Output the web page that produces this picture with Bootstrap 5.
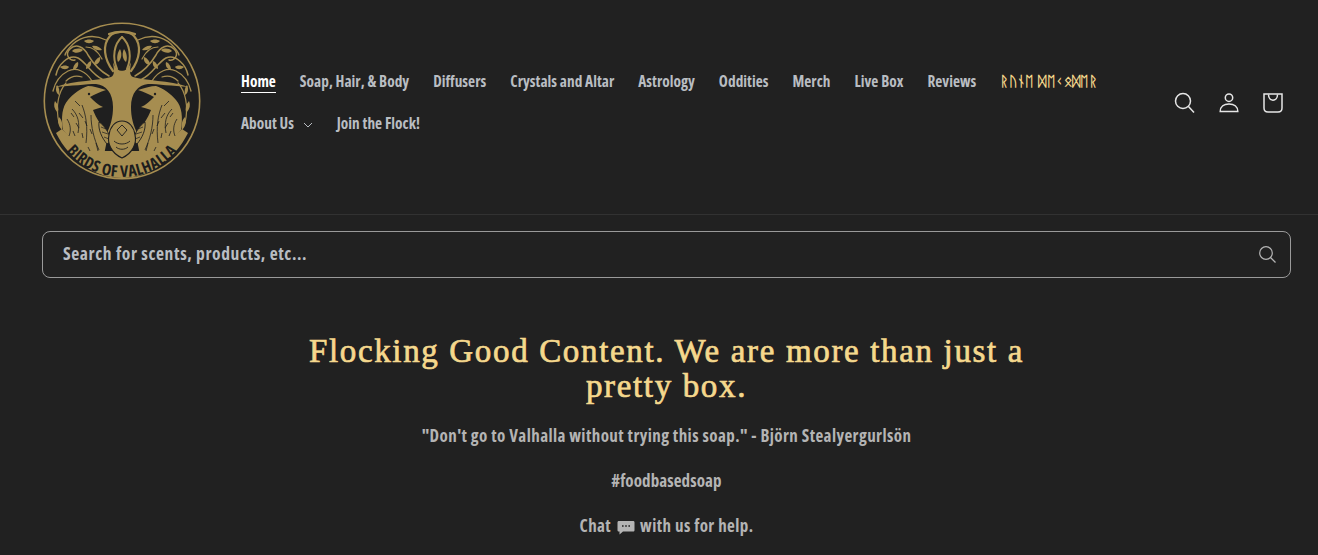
<!DOCTYPE html>
<html lang="en">
<head>
  <meta charset="UTF-8">
  <meta name="viewport" content="width=device-width, initial-scale=1">
  <title>Birds of Valhalla</title>
  <link href="https://cdn.jsdelivr.net/npm/bootstrap@5.3.3/dist/css/bootstrap.min.css" rel="stylesheet">
  <style>
    html, body {
      background-color: #212121;
      overflow: hidden;
    }
    body {
      font-family: "Open Sans", "Liberation Sans", sans-serif;
      font-stretch: 75%;
      color: #bcbcbc;
      height: 555px;
    }
    .site-head {
      height: 215px;
      padding: 21px 23px 0 42px;
      border-bottom: 1px solid #323232;
    }
    .logo-box { width: 160px; height: 160px; flex: none; }
    .logo-word {
      font-family: "Open Sans", sans-serif;
      font-stretch: 75%;
      font-weight: 700;
      font-size: 16px;
      letter-spacing: .35px;
      fill: #1d1d1d;
    }
    .main-menu {
      width: 890px;
      margin-left: 27px;
      margin-top: 39px;
    }
    .main-menu a {
      display: inline-block;
      padding: 12px;
      line-height: 18px;
      font-size: 15.3px;
      font-weight: 700;
      letter-spacing: .03px;
      color: #b9bdc2;
      text-decoration: none;
    }
    .main-menu a.now { color: #fff; }
    .main-menu a.now span { border-bottom: 1px solid #fff; padding-bottom: 1px; }
    .main-menu a.runes {
      color: #f3d58a;
      font-family: "DejaVu Sans", "Noto Sans", sans-serif;
      font-size: 13.5px;
      font-weight: 700;
      letter-spacing: .4px;
    }
    .caret-mark { margin-left: 6px; }
    .head-icons { margin-left: auto; margin-top: 60px; height: 44px; }
    .head-icons a { width: 44px; height: 44px; display: flex; align-items: center; justify-content: center; color: #e6e6e6; }
    .search-bar {
      margin: 16px 0 0 42px;
      width: 1249px;
      height: 47px;
      border: 1px solid #9a9a9a;
      border-radius: 8px;
      padding: 0 13px 0 20px;
    }
    .search-bar input {
      background: transparent;
      border: 0;
      outline: 0;
      padding: 0 0 2px;
      flex: 1;
      font-stretch: 75%;
      font-size: 17.5px;
      font-weight: 700;
      letter-spacing: .6px;
      color: #b9bdc2;
    }
    .search-bar input::placeholder { color: #b9bdc2; opacity: 1; }
    .intro-block {
      margin: 56px 0 0 42px;
      width: 1249px;
    }
    .intro-title {
      width: 750px;
      font-family: "Liberation Serif", serif;
      font-size: 33px;
      line-height: 35px;
      font-weight: 400;
      letter-spacing: 1.65px;
      -webkit-text-stroke: .7px #f5d88d;
      color: #f5d88d;
      margin: 0 auto 20px;
    }
    .intro-block p {
      font-size: 17px;
      font-weight: 700;
      line-height: 23px;
      letter-spacing: .42px;
      color: #b4b4b4;
      margin: 0 0 22px;
    }
    .intro-block p.tag-line { letter-spacing: .1px; }
    .chat-mark { margin: 0 2px; }
  </style>
</head>
<body>
  <header class="site-head d-flex align-items-start">
    <a href="#" class="logo-box d-block">
      <svg width="160" height="160" viewBox="0 0 160 160">
        <circle cx="80" cy="80" r="77.7" fill="#1f1f1f" stroke="#a68d50" stroke-width="1.600"/>
        <path fill="#a68d50" d="M20 108C30 118 46 130 64 130L96 130C114 130 130 118 140 108L146 112C132 140 106 157 80 157C54 157 28 140 14 112Z"/>
        <g id="half-logo">
          <!-- crown and vines -->
          <g fill="none" stroke="#a68d50" stroke-linecap="round">
            <path stroke-width="2.200" d="M71 50C62 38 60 24 68 15C72 11 82 9 93 13"/>
            <path stroke-width="2" d="M75 48C70 36 72 23 80 16"/>
            <path stroke-width="1.500" d="M67 55C58 50 52 44 46 34C42 26 34 22 28 28C22 34 28 40 33 39"/>
            <path stroke-width="1.500" d="M60 58C50 54 44 41 36 37C26 33 16 44 14 54"/>
            <path stroke-width="1.300" d="M64 19C52 13 40 15 31 23C27 27 24 30 23 34"/>
            <path stroke-width="1.300" d="M50 60C44 50 34 46 26 50C18 54 13 62 11 70"/>
            <path stroke-width="1.200" d="M24 62C17 70 13 84 17 102"/>
            <path stroke-width="1.200" d="M60 38C56 30 50 26 44 26M40 56C34 54 28 56 24 60"/>
          </g>
          <!-- leaves -->
          <g fill="#a68d50">
            <path d="M76 41C74 36 76 31 78 28C80 32 80 38 76 41Z"/>
            <path d="M50 25C54 24 58 26 60 29C56 30 52 29 50 25Z"/>
            <path d="M30 30C33 27 38 27 41 29C38 32 33 33 30 30Z"/>
            <path d="M52 44C52 40 55 37 58 36C59 40 56 44 52 44Z"/>
            <path d="M44 48C44 44 46 41 49 40C50 44 48 47 44 48Z"/>
            <path d="M31 49C31 45 33 42 36 41C37 45 35 48 31 49Z"/>
            <path d="M18 46C21 44 25 44 27 46C25 49 21 49 18 46Z"/>
            <path d="M15 64C17 66 18 70 17 74C14 72 13 68 15 64Z"/>
            <path d="M13 80C16 83 17 87 16 92C13 89 11 85 13 80Z"/>
            <path d="M17 96C20 99 21 104 20 109C17 106 15 101 17 96Z"/>
            <path d="M42 20C45 18 49 18 52 20C49 23 45 23 42 20Z"/>
          </g>
          <!-- trunk and main branch -->
          <path fill="#a68d50" d="M81 50C76 50 73 47 71 41C72 50 73 54 69 56C56 60 34 59 13 66C30 65 44 63 54 63C64 64 71 72 71 86C71 96 69 104 64 114L81 114Z"/>
          <!-- raven -->
          <path fill="#a68d50" d="M46 65C51 65 57 67 64 69C58 71 53 73 48 76C52 80 56 84 61 86C57 87 54 88 51 89C54 97 60 106 66 114L62 134C44 128 30 120 21 109C19 96 20 86 26 79C31 73 39 67 46 65Z"/>
          <g fill="none" stroke="#1f1f1f" stroke-width=".8">
            <path d="M30 88C36 94 38 102 36 112M40 84C44 94 46 106 44 122M49 94C49 106 52 118 57 129M25 98C29 104 29 110 27 115"/>
            <path d="M33 80L38 85M37 92L41 97M29 92L32 96M43 100L45 105M34 102L37 107M40 112L41 117M48 108L50 113M31 110L33 115"/>
            <path d="M54 122L56 130M46 126L48 130"/>
          </g>
          <circle cx="47" cy="73" r="1.200" fill="#1f1f1f"/>
          <!-- wing tip -->
          <path fill="#a68d50" stroke="#1f1f1f" stroke-width=".9" d="M57 101C62 104 67 111 69 120L65 123C60 117 56 109 57 101Z"/>
          <path fill="none" stroke="#1f1f1f" stroke-width=".7" d="M59 106L64 108M60 111L66 113M62 116L67 118"/>
        </g>
        <use href="#half-logo" transform="translate(160 0) scale(-1 1)"/>
        <!-- small bird -->
        <path fill="#a68d50" stroke="#1f1f1f" stroke-width="1.100" d="M80 100C87 100 92 106 93 114C95 122 91 132 80 137C69 132 65 122 67 114C68 106 73 100 80 100Z"/>
        <path fill="none" stroke="#1f1f1f" stroke-width=".9" d="M75 109L80 104L85 109L80 115ZM72 120C76 124 84 124 88 120M74 126C77 129 83 129 86 126"/>
        <path id="logo-arc" fill="none" d="M9 100A73 73 0 0 0 151 100"/>
        <text class="logo-word">
          <textPath href="#logo-arc" startOffset="50%" text-anchor="middle">BIRDS OF VALHALLA</textPath>
        </text>
      </svg>
    </a>
    <nav class="main-menu d-flex flex-wrap">
      <a href="#" class="now"><span>Home</span></a>
      <a href="#">Soap, Hair, &amp; Body</a>
      <a href="#">Diffusers</a>
      <a href="#">Crystals and Altar</a>
      <a href="#">Astrology</a>
      <a href="#">Oddities</a>
      <a href="#">Merch</a>
      <a href="#">Live Box</a>
      <a href="#">Reviews</a>
      <a href="#" class="runes">ᚱᚢᚾᛖ ᛞᛖᚲᛟᛞᛖᚱ</a>
      <a href="#">About Us
        <svg class="caret-mark" width="10" height="6" viewBox="0 0 10 6"><path d="M1 1l4 4 4-4" fill="none" stroke="#b9bdc2"/></svg>
      </a>
      <a href="#">Join the Flock!</a>
    </nav>
    <div class="head-icons d-flex">
      <a href="#" aria-label="Search">
        <svg width="22" height="22" viewBox="0 0 22 22" fill="none" stroke="currentColor" stroke-width="1.500"><circle cx="9" cy="9" r="7.500"/><path d="M14.500 14.500L20 20.500"/></svg>
      </a>
      <a href="#" aria-label="Account">
        <svg width="20" height="20" viewBox="0 0 20 20" fill="none" stroke="currentColor" stroke-width="1.500"><circle cx="10" cy="4.700" r="3.700"/><path d="M1.200 18.500C1.200 13.500 5 11 10 11C15 11 18.800 13.500 18.800 18.500Z"/></svg>
      </a>
      <a href="#" aria-label="Cart">
        <svg width="20" height="20" viewBox="0 0 20 20" fill="none" stroke="currentColor" stroke-width="1.500"><path d="M1 1H19V15C19 17.500 17.500 19 15 19H5C2.500 19 1 17.500 1 15Z"/><path d="M5.500 1.500C5.500 9 14.500 9 14.500 1.500"/></svg>
      </a>
    </div>
  </header>

  <form class="search-bar d-flex align-items-center">
    <input type="text" placeholder="Search for scents, products, etc...">
    <svg width="19" height="19" viewBox="0 0 19 19" fill="none" stroke="#b5b5b5" stroke-width="1.200"><circle cx="8" cy="8" r="6.300"/><path d="M12.500 12.500L17.500 17.500"/></svg>
  </form>

  <section class="intro-block text-center">
    <h2 class="intro-title">Flocking Good Content. We are more than just a pretty box.</h2>
    <p>"Don't go to Valhalla without trying this soap." - Björn Stealyergurlsön</p>
    <p class="tag-line">#foodbasedsoap</p>
    <p>Chat
      <svg class="chat-mark align-middle" width="18" height="15" viewBox="0 0 18 15"><path fill="#b4b4b4" d="M2 1H16C17 1 17.500 1.500 17.500 2.500V10C17.500 11 17 11.500 16 11.500H6L2.500 14.500V11.500H2C1 11.500 .5 11 .5 10V2.500C.5 1.500 1 1 2 1Z"/><path fill="#212121" d="M5 5.200h1.600v1.600H5zM8.200 5.200h1.600v1.600H8.200zM11.400 5.200H13v1.600h-1.600z"/></svg>
      with us for help.</p>
  </section>
  <script src="https://cdn.jsdelivr.net/npm/bootstrap@5.3.3/dist/js/bootstrap.bundle.min.js"></script>
</body>
</html>
